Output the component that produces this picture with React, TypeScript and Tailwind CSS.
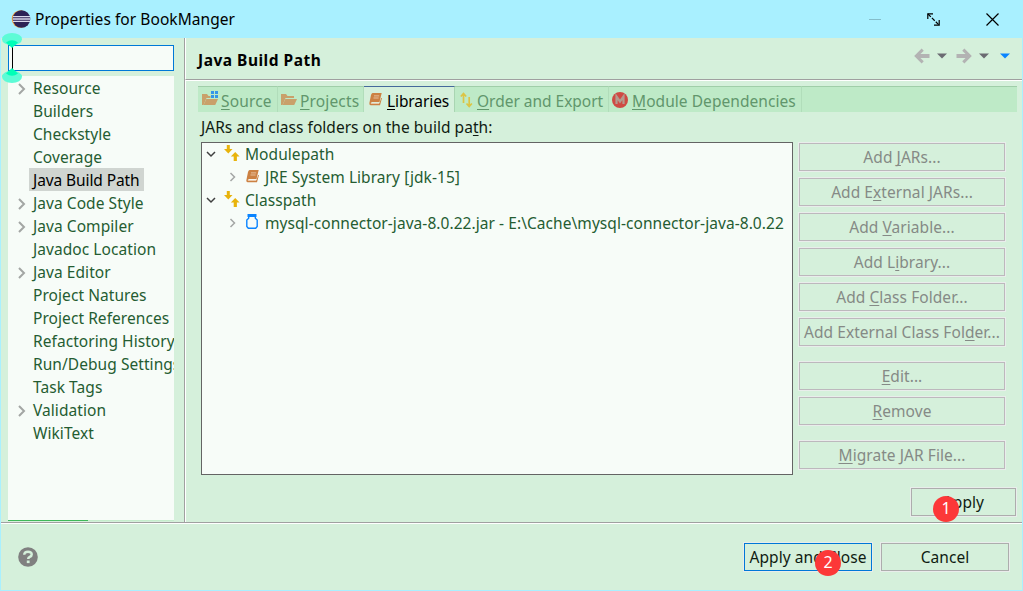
import React from "react";

type TreeItem = { label: string; expandable?: boolean; selected?: boolean };

const pages: TreeItem[] = [
  { label: "Resource", expandable: true },
  { label: "Builders" },
  { label: "Checkstyle" },
  { label: "Coverage" },
  { label: "Java Build Path", selected: true },
  { label: "Java Code Style", expandable: true },
  { label: "Java Compiler", expandable: true },
  { label: "Javadoc Location" },
  { label: "Java Editor", expandable: true },
  { label: "Project Natures" },
  { label: "Project References" },
  { label: "Refactoring History" },
  { label: "Run/Debug Settings" },
  { label: "Task Tags" },
  { label: "Validation", expandable: true },
  { label: "WikiText" },
];

/* Renders a label whose mnemonic letter is marked with "&". */
function Mnemonic({ text }: { text: string }) {
  const i = text.indexOf("&");
  if (i < 0) return <>{text}</>;
  return (
    <span>
      {text.slice(0, i)}
      <span className="underline decoration-1 underline-offset-2 [text-decoration-skip-ink:none]">{text[i + 1]}</span>
      {text.slice(i + 2)}
    </span>
  );
}

function ChevronRight({ thin }: { thin?: boolean }) {
  return (
    <svg width="8" height="12" viewBox="0 0 8 12" fill="none" stroke="#a3a6a4" strokeWidth={thin ? 1.5 : 2}>
      <path d={thin ? "M1.5 2L5.5 6L1.5 10" : "M1 1L6 6L1 11"} />
    </svg>
  );
}

function ChevronDown() {
  return (
    <svg width="10" height="8" viewBox="0 0 10 8" fill="none" stroke="#404040" strokeWidth="1.5">
      <path d="M1 2L5 6L9 2" />
    </svg>
  );
}

function EclipseIcon() {
  return (
    <svg width="20" height="20" viewBox="0 0 20 20">
      <circle cx="9.5" cy="10" r="8.8" fill="#f3a03c" />
      <circle cx="10.5" cy="10" r="8.8" fill="#2c2255" />
      <path d="M2 7.7H19M1.8 10H19.2M2 12.3H19" stroke="#d9d8ea" strokeWidth="1.3" />
    </svg>
  );
}

function FolderIcon({ source }: { source?: boolean }) {
  return (
    <svg width="17" height="16" viewBox="0 0 17 16">
      <path d="M0 13V3h5l1.5 2H13v2H4.5L1.5 14H0z" fill="#c9a06a" />
      <path d="M4.3 8H16l-2.8 6H1.5z" fill="#c9a06a" />
      {source && (
        <>
          <path d="M8.5 0H17V8H8.5z" fill="#beeac7" />
          <path d="M9 0h3v3H9zM13 0h3v3h-3zM9 4h3v3H9zM13 4h3v3h-3z" fill="#3596e8" />
        </>
      )}
    </svg>
  );
}

function BookIcon() {
  return (
    <svg width="13" height="13" viewBox="0 0 13 13">
      <path d="M3.5 0H12.7L10.5 9H2.6L2.3 10.3H10.4L12.2 5H13L11 12.3H1.5Q0 12 .4 10L2 2Q2.4 .3 3.5 0z" fill="#cc8142" />
      <path d="M5 2.9H10.2M4.5 5H9.6" stroke="#eed0b5" strokeWidth=".8" />
      <path d="M1.8 10.2H10" stroke="#f6e2d0" strokeWidth=".9" />
    </svg>
  );
}

function PathIcon() {
  return (
    <svg width="16" height="16" viewBox="0 0 16 16" fill="#e8b30c">
      <path d="M2.8 0H5.8V4H8.5L4.3 8.5L0 4H2.8z" />
      <path d="M11.2 7L15.6 11.5H12.9V16H9.7V11.5H6.8z" />
    </svg>
  );
}

function JarIcon() {
  return (
    <svg width="12" height="15" viewBox="0 0 12 15">
      <path d="M1.5 0H10.5V3H1.5z" fill="#0a84ff" />
      <path d="M2.7 3V4.2L.8 6V12.5L2.3 14.2H9.7L11.2 12.5V6L9.3 4.2V3" fill="none" stroke="#0a84ff" strokeWidth="1.4" />
    </svg>
  );
}

function OrderIcon() {
  return (
    <svg width="13" height="16" viewBox="0 0 13 16" fill="none" stroke="#dcc545" strokeWidth="1.7">
      <path d="M3.5 11V1.5M.8 4.5L3.5 1.6L6.2 4.5M9.2 5V14.5M6.5 11.5L9.2 14.4L11.9 11.5" />
    </svg>
  );
}

function ModuleIcon() {
  return (
    <svg width="16" height="16" viewBox="0 0 16 16">
      <circle cx="8" cy="8" r="8" fill="#cf4a43" />
      <path d="M4.5 12V4.5L8 9.5L11.5 4.5V12" fill="none" stroke="#b59a8d" strokeWidth="2.2" />
    </svg>
  );
}

function HistoryArrow({ flip }: { flip?: boolean }) {
  return (
    <svg width="16" height="16" viewBox="0 0 16 16" className={flip ? "-scale-x-100" : ""} fill="none" stroke="#b3b3b3">
      <path d="M15.5 8H3" strokeWidth="4" />
      <path d="M8.7 1.6L2.3 8L8.7 14.4" strokeWidth="3" />
    </svg>
  );
}

function Caret({ blue }: { blue?: boolean }) {
  return (
    <svg width="10" height="6" viewBox="0 0 10 6">
      <path d="M0 .5H10L5 5.5z" fill={blue ? "#0a84ff" : "#6b6b72"} />
    </svg>
  );
}

function Button({ text, className }: { text: string; className: string }) {
  return (
    <div className={`flex h-7 shrink-0 items-center justify-center whitespace-nowrap border outline-1 outline-[#e9edeb] ${className}`}>
      <div className="pt-px"><Mnemonic text={text} /></div>
    </div>
  );
}

const disabled = "w-[206px] border-[#bdb8bd] text-[#858a86]";

function TextHandle({ down }: { down?: boolean }) {
  return (
    <svg width="20" height="15" viewBox="0 0 20 15" className={down ? "-scale-y-100" : ""}>
      <ellipse cx="10" cy="6.2" rx="10" ry="6.2" fill="#5dfbd6" />
      <path d="M4 9.5Q10 5 16 9.5L10 15z" fill="#00ffb8" />
    </svg>
  );
}

function Badge({ n }: { n: number }) {
  return (
    <div className="flex size-[26px] items-center justify-center rounded-full bg-[#fc3838] text-base leading-none text-white">
      <span className="-mt-0.5">{n}</span>
    </div>
  );
}

function Tab({ icon, text, className }: { icon: React.ReactNode; text: string; className: string }) {
  return (
    <div className={`flex shrink-0 items-center whitespace-nowrap border-t ${className}`}>
      {icon}
      <div className="ml-0.5 mt-[3px]"><Mnemonic text={text} /></div>
    </div>
  );
}

const idle = "border-t-[#a0cea9] border-r border-r-[#b1ddba] bg-[#beeac7] text-[#61966c]";

export default function App() {
  return (
    <div className="relative flex h-[591px] w-[1023px] flex-col overflow-hidden bg-[#a9f0ff] px-px pb-px font-['Noto_Sans',sans-serif] text-[15.5px] leading-[23px] tracking-[0.06px] text-[#101c12]">
      <header className="flex h-[38px] shrink-0 items-center pl-2.5 text-black">
        <EclipseIcon />
        <span className="ml-1 pt-px">Properties for BookManger</span>
        <div className="ml-auto mr-[23px] flex items-center">
          <div className="h-px w-3 bg-[#84bdca]" />
          <svg className="ml-[46px]" width="13" height="13" viewBox="0 0 13 13" fill="none" stroke="black" strokeWidth="1.2">
            <path d="M.8 6V.8H6M12.2 7V12.2H7" />
            <path d="M1 1L12 12" strokeDasharray="4 1.5" />
          </svg>
          <svg className="ml-[46px]" width="13" height="13" viewBox="0 0 13 13" stroke="black" strokeWidth="1.2">
            <path d="M.5 .5L12.5 12.5M12.5 .5L.5 12.5" />
          </svg>
        </div>
      </header>

      <div className="flex h-[485px] shrink-0 border-b border-[#a0a0a0] bg-[#d5f0db]">
        <aside className="w-[183px] shrink-0 pl-[7px] pt-[7px]">
          <div className="flex h-[26px] w-[166px] items-center border border-[#0078d7] bg-[#f7fcf8] pl-[3px]">
            <div className="h-[22px] w-px bg-black" />
          </div>
          <div className="mt-[5px] flex h-[445px] w-[166px] flex-col overflow-hidden bg-[#f7fcf8]">
            {pages.map((p) => (
              <div key={p.label} className="flex h-[23px] shrink-0 items-center whitespace-nowrap text-[#255c32]">
                <div className="flex w-[21px] shrink-0 justify-end pr-[3px] pt-0.5">{p.expandable && <ChevronRight />}</div>
                <div className={p.selected ? "h-[23px] bg-[#d0d5d1] px-1 pt-px tracking-[-0.1px] text-black" : "h-[23px] px-1 pt-px"}>{p.label}</div>
              </div>
            ))}
            <div className="mt-auto h-px shrink-0 bg-[#c5edcc]">
              <div className="h-px w-20 bg-[#3eb959]" />
            </div>
          </div>
        </aside>
        <main className="flex min-w-0 grow flex-col border-l border-[#a0a0a0]">
          <div className="flex h-[42px] shrink-0 items-center border-b border-l border-b-[#a0a0a0] border-l-white pl-3 text-black">
            <span className="mt-1 font-bold tracking-[0.5px]">Java Build Path</span>
            <div className="-mt-[5px] ml-auto mr-3 flex items-center">
              <HistoryArrow />
              <div className="ml-[7px]"><Caret /></div>
              <div className="ml-[9px] flex"><HistoryArrow flip /></div>
              <div className="ml-[7px]"><Caret /></div>
              <div className="ml-[11px]"><Caret blue /></div>
            </div>
          </div>
          <div className="grow border-l border-t border-white pl-3 pt-[5px]">
            <div className="flex h-[26px] w-[819px] bg-[#beeac7]">
              <Tab icon={<div className="-mt-0.5 ml-1"><FolderIcon source /></div>} text="&Source" className={`w-20 tracking-[0.15px] ${idle}`} />
              <Tab icon={<div className="-mt-0.5 ml-[3px]"><FolderIcon /></div>} text="&Projects" className={`w-[86px] tracking-[0.15px] ${idle}`} />
              <Tab icon={<div className="ml-[5px] mr-[3px]"><BookIcon /></div>} text="&Libraries" className="w-[91px] border-t-[#456a9b] border-r border-r-[#a9d5b2] bg-[#d5f0db] tracking-[-0.1px] text-black" />
              <Tab icon={<div className="ml-[5px] mr-0.5"><OrderIcon /></div>} text="&Order and Export" className={`w-[154px] tracking-[-0.02px] ${idle}`} />
              <Tab icon={<div className="ml-[3px] mr-0.5"><ModuleIcon /></div>} text="&Module Dependencies" className={`w-[193px] ${idle}`} />
              <div className="grow border-t border-[#a0cea9]" />
            </div>
            <div className="ml-[3px] mt-1 tracking-[0.03px]"><Mnemonic text="JARs and class folders on the build pa&th:" /></div>
            <div className="ml-[3px] mt-[3px] flex">
              <div className="h-[333px] w-[592px] shrink-0 border border-[#646464] bg-[#f7fcf8] text-[#255c32]">
                <div className="-mt-px flex h-[23px] items-center pl-1">
                  <ChevronDown />
                  <div className="ml-2 -mt-0.5"><PathIcon /></div>
                  <span className="ml-[5px] pt-px">Modulepath</span>
                </div>
                <div className="flex h-[23px] items-center pl-[27px]">
                  <ChevronRight thin />
                  <div className="ml-[9px]"><BookIcon /></div>
                  <span className="ml-1.5 pt-px">JRE System Library [jdk-15]</span>
                </div>
                <div className="flex h-[23px] items-center pl-1">
                  <ChevronDown />
                  <div className="ml-2 -mt-0.5"><PathIcon /></div>
                  <span className="ml-[5px] pt-px">Classpath</span>
                </div>
                <div className="flex h-[23px] items-center pl-[27px]">
                  <ChevronRight thin />
                  <div className="ml-[9px] -mt-0.5"><JarIcon /></div>
                  <span className="ml-[7px] whitespace-nowrap pt-px">mysql-connector-java-8.0.22.jar - E:\Cache\mysql-connector-java-8.0.22</span>
                </div>
              </div>
              <div className="ml-1.5 flex flex-col gap-[7px] pt-px">
                <Button text="Add &JARs..." className={disabled} />
                <Button text="Add E&xternal JARs..." className={disabled} />
                <Button text="Add &Variable..." className={disabled} />
                <Button text="Add L&ibrary..." className={disabled} />
                <Button text="Add &Class Folder..." className={disabled} />
                <Button text="Add External Class Fol&der..." className={disabled} />
                <Button text="&Edit..." className={`mt-[9px] ${disabled}`} />
                <Button text="&Remove" className={disabled} />
                <Button text="&Migrate JAR File..." className={`mt-[9px] ${disabled}`} />
              </div>
            </div>
            <div className="mr-1.5 mt-[13px] flex justify-end">
              <Button text="Apply" className="w-[105px] border-[#adadad]" />
            </div>
          </div>
        </main>
      </div>

      <footer className="flex grow items-center border-t border-white bg-[#d5f0db] pl-[17px] pr-[13px]">
        <svg width="20" height="20" viewBox="0 0 20 20">
          <circle cx="10" cy="10" r="9.8" fill="#808080" />
          <path d="M6.3 7.8Q6.2 4.8 10 4.8T13.7 7.5Q13.7 9 11.8 9.8Q10.2 10.5 10.2 12" fill="none" stroke="#d5f0db" strokeWidth="2.5" />
          <path d="M8.8 13.5h2.8v2.6H8.8z" fill="#d5f0db" />
        </svg>
        <div className="ml-auto flex gap-[9px]">
          <Button text="Apply and Close" className="w-32 border-[#0078d7]" />
          <Button text="Cancel" className="w-32 border-[#adadad]" />
        </div>
      </footer>

      <div className="absolute left-0.5 top-[33px] flex"><TextHandle /></div>
      <div className="absolute left-0.5 top-[68px] flex"><TextHandle down /></div>
      <div className="absolute left-[933px] top-[496px]"><Badge n={1} /></div>
      <div className="absolute left-[815px] top-[550px]"><Badge n={2} /></div>
    </div>
  );
}
